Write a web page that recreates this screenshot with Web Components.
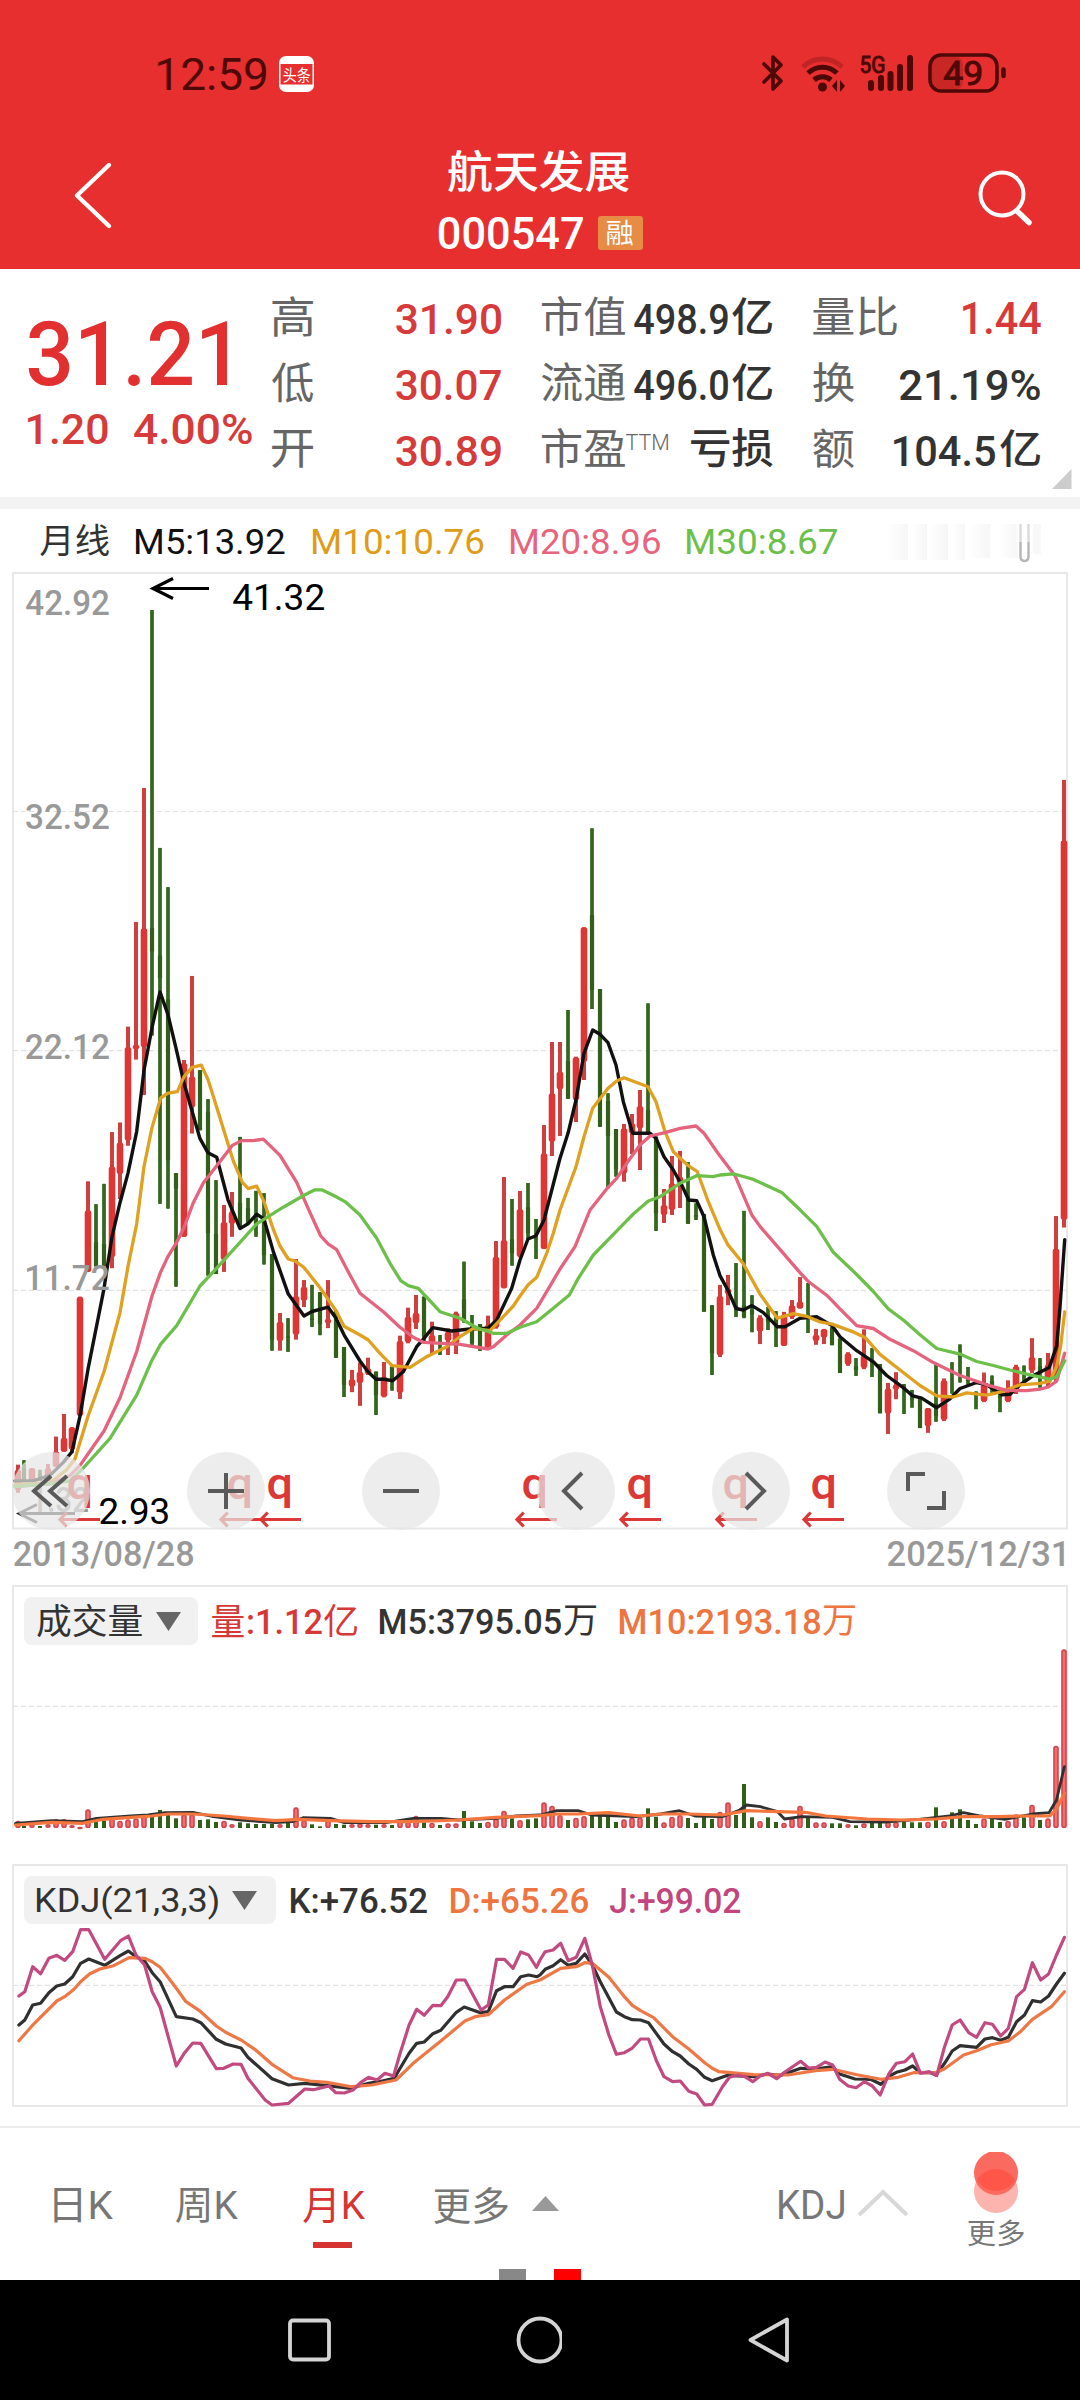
<!DOCTYPE html>
<html lang="zh-CN">
<head>
<meta charset="utf-8">
<title>航天发展 000547</title>
<style>
body{margin:0;background:#fff;width:1080px;font-family:Roboto,"Noto Sans CJK SC",sans-serif}
</style>
</head>
<body>
<stock-app></stock-app>
<script>
const FAMILY='Roboto, "Noto Sans CJK SC", sans-serif';
const pen=document.createElement('canvas').getContext('2d');
// Places a string so that its ink fills the box x,y,w,h.
function ink(text,x,y,w,h,color,weight=400){
  pen.font=`${weight} 100px ${FAMILY}`;
  const m=pen.measureText(text);
  const iw=m.actualBoundingBoxLeft+m.actualBoundingBoxRight, ih=m.actualBoundingBoxAscent+m.actualBoundingBoxDescent;
  const fs=100*h/ih, sx=w/(iw*fs/100);
  return `<text transform="translate(${(x+m.actualBoundingBoxLeft*fs/100*sx).toFixed(2)} ${(y+m.actualBoundingBoxAscent*fs/100).toFixed(2)}) scale(${sx.toFixed(4)} 1)" font-family='${FAMILY}' font-size="${fs.toFixed(2)}" font-weight="${weight}" fill="${color}">${text}</text>`;
}
function define(name,html){
  const t=document.createElement('template');t.innerHTML=html;
  customElements.define(name,class extends HTMLElement{
    constructor(){super();this.attachShadow({mode:'open'}).append(t.content.cloneNode(true));}
  });
}
customElements.define('ink-text',class extends HTMLElement{
  constructor(){super();this.attachShadow({mode:'open'});}
  connectedCallback(){
    const a=(n,d=0)=>this.getAttribute(n)??d, w=+a('w'),h=+a('h');
    this.shadowRoot.innerHTML=`<style>:host{display:block;flex:none;width:${w}px;height:${h}px;margin-left:${a('gap')}px;margin-top:${a('drop')}px}svg{display:block;overflow:visible}</style><svg width="${w}" height="${h}">${ink(a('t',''),0,0,w,h,'currentColor',+a('b',400))}</svg>`;
  }
});

define('status-bar',`<style>:host{display:flex;align-items:flex-start;height:57px;padding:53px 0 0 158px;color:#4d0808}svg{display:block;flex:none;overflow:visible}</style>
<ink-text t="12:59" w="108" h="33" drop="4" b="400"></ink-text>
<svg width="35" height="36" style="margin:3px 0 0 13px"><rect width="35" height="36" rx="7" fill="#fff"/><rect x="1.500" y="8" width="32" height="20.500" fill="#e62f2e"/>${ink('头条',4.5,11,27,15,'#fff',400)}</svg>
<svg width="245" height="40" viewBox="761 53 245 40" style="margin-left:447px" fill="none" stroke="#4d0808">
<path d="M764 64 L781 81 L773 89 V57 L781 65 L764 82" stroke-width="3.600" stroke-linejoin="round" stroke-linecap="round"/>
<path d="M803 67 A28 28 0 0 1 842 67" stroke="#c02424" stroke-width="5"/><path d="M808 73 A21 21 0 0 1 837 73" stroke-width="5"/><path d="M814 80 A13 13 0 0 1 831 80" stroke-width="5"/><circle cx="822.500" cy="87" r="4.500" fill="#4d0808" stroke="none"/>
<path d="M832 86 L837 80 V92 Z M845 86 L840 80 V92 Z" fill="#4d0808" stroke="none"/>
<g stroke-width="6" stroke-linecap="round"><path d="M871 83V88M881 78V88M890.500 74V88M900 67V88M910 58V88"/></g>
${ink('5G',861,56,23,17,'#4d0808',400)}
<rect x="932" y="57" width="31" height="32" rx="7" fill="#c92626" stroke="none"/><rect x="930" y="55" width="67" height="36" rx="11" stroke-width="3.500"/>
<path d="M1003.500 69.500V76" stroke-width="4.500" stroke-linecap="round"/>${ink('49',944,61,37,24,'#4d0808',400)}
</svg>`);

define('title-bar',`<style>:host{display:flex;align-items:flex-start;height:159px;color:#fff}svg{display:block;flex:none}.mid{width:720px;display:flex;flex-direction:column}.row{display:flex;margin-top:24px;padding-left:235px}.badge{box-sizing:border-box;width:45px;height:34px;margin-left:15px;border-radius:3px;background:#e68c45;padding:4px 9px}</style>
<svg width="54" height="75" viewBox="66 159 54 75" style="margin:48px 0 0 66px"><path d="M109 166L77 196.500L109 227" fill="none" stroke="#fff" stroke-width="4.400" stroke-linecap="round" stroke-linejoin="round"/></svg>
<div class="mid" style="margin-left:84px"><ink-text t="航天发展" w="181" h="43" gap="244" drop="39" b="500"></ink-text>
<div class="row"><ink-text t="000547" w="144" h="33" b="500"></ink-text><div class="badge"><ink-text t="融" w="26" h="25" b="400"></ink-text></div></div></div>
<svg width="62" height="62" viewBox="974 168 62 62" style="margin:57px 0 0 50px"><circle cx="1002" cy="195" r="21.500" fill="none" stroke="#fff" stroke-width="4"/><path d="M1018 213L1029 223.500" stroke="#fff" stroke-width="5.500" stroke-linecap="round"/></svg>`);

define('quote-board',`<style>:host{display:flex;align-items:flex-start;height:228px;color:#333;border-bottom:12px solid #f3f3f3}
.r{color:#d63a3a}.g{color:#666}.price{width:244.500px;padding:51px 0 0 27.500px}.price ink-text:first-child{color:#e23030}.price .r ink-text{color:#d63a3a}.row{display:flex}.grid{width:808px}.grid .row{height:66px;align-items:flex-start}.grid{padding-top:27px}.cell{display:flex;flex:none;height:42px}.c1{width:270px}.c2{width:271px}.c3{width:230px}svg{position:absolute;left:1051px;top:469px}</style>
<div class="price"><ink-text t="31.21" w="199.500" h="66" b="500"></ink-text><div class="row r"><ink-text t="1.20" w="79.500" h="32" drop="26" b="500"></ink-text><ink-text t="4.00%" w="118" h="32" gap="27" drop="26" b="500"></ink-text></div></div>
<div class="grid">
<div class="row"><div class="cell c1"><ink-text class="g" t="高" w="41" h="41"></ink-text><ink-text class="r" t="31.90" w="105" h="32" gap="83" drop="5.500" b="500"></ink-text></div><div class="cell c2"><ink-text class="g" t="市值" w="83" h="40"></ink-text><ink-text t="498.9" w="94" h="32" gap="9" drop="5.500" b="500"></ink-text><ink-text t="亿" w="40" h="37" gap="4" drop="2" b="500"></ink-text></div><div class="cell c3"><ink-text class="g" t="量比" w="84" h="39"></ink-text><ink-text class="r" t="1.44" w="78" h="32" gap="66" drop="5.500" b="500"></ink-text></div></div>
<div class="row"><div class="cell c1"><ink-text class="g" t="低" w="41" h="41"></ink-text><ink-text class="r" t="30.07" w="105" h="32" gap="83" drop="5.500" b="500"></ink-text></div><div class="cell c2"><ink-text class="g" t="流通" w="83" h="40"></ink-text><ink-text t="496.0" w="94" h="32" gap="9" drop="5.500" b="500"></ink-text><ink-text t="亿" w="40" h="37" gap="4" drop="2" b="500"></ink-text></div><div class="cell c3"><ink-text class="g" t="换" w="41" h="40"></ink-text><ink-text t="21.19%" w="140" h="32" gap="46" drop="5.500" b="500"></ink-text></div></div>
<div class="row"><div class="cell c1"><ink-text class="g" t="开" w="41" h="38" drop="2"></ink-text><ink-text class="r" t="30.89" w="105" h="32" gap="83" drop="5.500" b="500"></ink-text></div><div class="cell c2"><ink-text class="g" t="市盈" w="83" h="40"></ink-text><ink-text class="g" t="TTM" w="42" h="16" gap="1" drop="6" b="300"></ink-text><ink-text t="亏损" w="82" h="39" gap="23" b="500"></ink-text></div><div class="cell c3"><ink-text class="g" t="额" w="41" h="40"></ink-text><ink-text t="104.5" w="101" h="32" gap="40" drop="5.500" b="500"></ink-text><ink-text t="亿" w="40" h="37" gap="5" drop="2" b="500"></ink-text></div></div>
</div><svg width="21" height="20"><path d="M1 20H20.500V0Z" fill="#ccc"/></svg>`);

define('ma-legend',`<style>:host{display:flex;align-items:flex-start;height:46px;padding:15px 0 0 40px;color:#333}.k{color:#111}.o{color:#e09b17}.p{color:#e8637d}.n{color:#6cc04a}.ghost{width:160px;height:44px;margin-left:51px;flex:none}svg{display:block}</style>
<ink-text t="月线" w="69" h="32.500"></ink-text><ink-text class="k" t="M5:13.92" w="148.500" h="26" gap="27" drop="4"></ink-text><ink-text class="o" t="M10:10.76" w="170.500" h="26" gap="28.500" drop="4"></ink-text><ink-text class="p" t="M20:8.96" w="149" h="26" gap="27.500" drop="4"></ink-text><ink-text class="n" t="M30:8.67" w="150" h="26" gap="27" drop="4"></ink-text>
<svg class="ghost"><defs><linearGradient id="f"><stop offset="0" stop-color="#fff"/><stop offset="1" stop-color="#dedede"/></linearGradient><linearGradient id="u" x2="0" y2="1" gradientUnits="userSpaceOnUse" y1="0" x1="0"><stop offset="0" stop-color="#eee"/><stop offset="1" stop-color="#aaa"/></linearGradient></defs><g fill="url(#f)" opacity=".25"><rect x="0" y="0" width="20" height="36"/><rect x="25" y="0" width="14" height="36"/><rect x="42" y="0" width="18" height="36"/><rect x="66" y="0" width="11" height="36"/><rect x="82" y="0" width="20" height="34"/><rect x="112" y="0" width="18" height="34"/></g><rect x="145" width="8" height="30" fill="#f8f8f8"/><path d="M132.500 0V32Q132.500 37 136.500 37Q140.500 37 140.500 32V0" fill="none" stroke="#b5b5b5" stroke-width="2.400"/><rect x="128" y="0" width="16" height="18" fill="#fff" opacity=".5"/></svg>`);

// Candles: [trend, high, low, bodyTop, bodyBottom]; each block has its own origin and unit.
const blocks=[
{x:0,first:2,y:1000,u:1/2.703,c:`r 1256 1332 1270 1325|g 1244 1300 1265 1300|r 1265 1300 1265 1300|g 1270 1300 1280 1300|r 1254 1300 1265 1300|r 1180 1260 1220 1262|r 1119 1221 1183 1221|r 1155 1225 1155 1215|r 802 1124 802 1124|r 490 735 568 735|g 552 720 655 720|g 497 720 660 720|r 357 725 450 695|r 331 538 385 470|r 72 394 127 380|r -211 161 121 133|r -573 257 -194 127|g -1054 96 -194 -131|g -411 551 -120 -59|g -305 564 -2 433|g 468 775 468 510|r 162 640 170 640|r -65 361 207 290|g 190 352 190 352|g 268 745 302 630|g 487 740 633 740|r 554 735 600 702|r 519 640 572 605|g 370 612 548 612|g 535 602 562 602|g 516 640 590 605|g 522 715 590 690|g 687 948 687 918|r 846 948 870 922|g 860 951 910 913|r 700 918 800 905|r 757 830 775 812|g 770 884 860 865|g 790 906 790 876|r 757 887 862 874|g 840 967 840 967|g 938 1073 938 1040|r 1000 1060 1025 1045|r 980 1097 1005 1035`,
l:{k:'45,1300 100,1300 150,1285 190,1250 216,1221 240,1125 264,998 312,780 336,640 360,548 384,468 410,355 432,190 456,75 480,-22 504,40 528,130 552,225 600,375 624,413 650,425 684,540 720,618 744,605 770,579 792,592 820,680 865,795 912,854 936,842 984,830 1008,860 1032,905',
o:'45,1310 150,1305 200,1270 225,1240 264,1125 312,1005 360,845 384,720 410,605 432,450 456,345 482,265 504,252 532,248 552,207 576,182 604,176 624,215 650,290 700,435 727,493 745,510 770,503 792,545 820,620 840,665 865,700 886,706 912,723 960,778 1008,840 1032,882',
p:'45,1315 150,1308 210,1285 240,1258 312,1165 360,1075 410,950 456,800 482,735 504,693 530,655 552,615 580,548 610,495 650,448 697,393 725,380 760,380 790,376 840,420 890,493 930,575 962,638 985,660 1010,675 1045,735',
n:'45,1315 150,1308 210,1300 250,1265 330,1185 410,1068 455,975 482,930 530,880 600,773 650,725 720,655 770,605 850,560 912,528 945,513 965,513 1000,528 1035,545'}},
{x:360,first:46,y:1200,u:1/3,c:`r 473 525 505 522|g 515 645 515 585|r 486 592 530 590|g 500 572 500 545|r 407 597 422 578|r 323 430 350 427|r 285 387 338 370|g 290 425 290 410|r 365 462 405 430|g 405 465 450 455|r 385 465 395 422|r 335 462 338 430|g 185 368 298 365|g 345 435 385 430|g 372 453 372 440|r 347 448 375 448|r 123 386 170 383|r -69 265 120 265|g -3 197 118 160|r -27 172 27 170|g -51 118 22 100|g 57 177 115 118|r -225 147 -140 147|r -474 -132 -320 -175|r -474 -192 -385 -332|g -570 -304 -417 -304|r -430 -234 -428 -300|r -818 -360 -818 -415|g -1115 -573 -855 -630|g -633 -220 -633 -220|g -320 -35 -297 -192|g -213 -70 -213 -92|r -228 -55 -215 -80|r -258 -138 -230 -200|r -330 -90 -282 -215|g -590 -195 -270 -200|g -190 93 -190 40|r -33 69 15 45|r -132 45 -50 30|r -147 24 -70 -50|g -114 72 -10 70|g 10 60 45 50|g 42 335 42 335|g 316 525 316 460`,
l:{k:'0,483 24,515 48,538 72,538 98,542 130,515 170,440 192,415 218,383 275,393 330,387 384,385 410,360 455,265 480,180 504,117 528,107 552,60 600,-125 624,-200 648,-300 672,-440 698,-510 720,-497 744,-472 768,-405 790,-295 818,-200 870,-200 888,-185 912,-130 940,-90 965,-45 986,0 1010,2 1032,50 1060,165',
o:'0,405 25,420 60,460 96,497 150,502 200,470 260,440 300,410 340,385 390,392 430,350 460,318 480,288 504,255 530,232 560,160 580,100 600,30 648,-100 672,-190 698,-275 744,-335 770,-357 792,-367 864,-340 888,-295 915,-205 940,-145 985,-103 1012,-85 1045,5',
p:'0,280 70,335 120,382 160,412 190,427 300,433 384,447 400,440 440,405 480,375 530,325 560,275 600,207 645,140 690,30 744,-38 770,-65 800,-110 840,-165 870,-192 915,-202 960,-215 1008,-222 1032,-200',
n:'0,45 50,115 90,190 122,242 145,257 175,265 205,297 240,335 300,355 350,383 400,400 440,400 480,382 530,365 580,325 628,285 655,235 700,165 780,83 820,42 865,3 900,-10 960,-50 1010,-73 1060,-70'}},
{x:720,first:90,y:1000,u:1/2.703,c:`r 770 965 800 960|r 743 825 780 795|g 711 857 826 835|g 570 860 825 857|g 798 898 838 850|r 852 930 857 896|g 830 892 850 870|g 841 938 860 880|r 843 935 850 935|r 811 862 825 858|r 749 834 815 834|g 765 900 860 862|r 889 932 905 922|r 889 930 889 912|g 885 933 885 933|g 915 1008 915 1008|r 952 989 955 985|g 968 1016 990 1000|r 890 998 960 995|g 941 1019 975 980|g 984 1117 984 1117|r 1035 1173 1050 1118|r 1006 1079 1040 1053|g 1038 1119 1045 1050|g 1054 1102 1075 1080|g 1078 1157 1078 1157|r 1103 1170 1103 1152|g 985 1140 1090 1125|r 1023 1138 1028 1135|g 979 1064 1000 1005|g 931 1034 960 965|g 992 1040 1020 1030|g 1058 1106 1060 1070|r 1007 1087 1040 1085|g 1015 1062 1030 1040|g 1052 1114 1070 1075|r 1028 1087 1055 1085|r 986 1065 990 1055|g 988 1032 1005 1010|r 914 1008 965 1003|g 968 1048 990 1010|r 954 1045 985 1035|r 584 1030 672 1025|r -595 615 -432 594`,
l:{k:'0,745 24,785 48,834 70,838 96,826 130,845 172,883 195,883 240,860 290,856 336,880 360,910 410,948 460,978 500,1015 550,1048 578,1070 605,1076 650,1102 690,1078 720,1050 770,1034 800,1040 845,1067 870,1066 900,1040 940,1015 988,993 1010,935 1020,830 1034,648',
o:'0,620 24,662 70,713 120,795 172,860 220,848 260,855 300,870 336,876 400,897 435,912 480,958 540,1000 600,1042 650,1070 700,1073 740,1062 800,1068 850,1058 900,1040 960,1036 990,1030 1010,990 1022,935 1034,843',
p:'0,422 45,475 96,582 120,612 168,662 240,737 264,760 320,798 360,835 410,880 460,888 510,917 580,948 640,980 720,1015 800,1040 860,1055 920,1056 960,1052 985,1046 1010,1030 1034,955',
n:'0,473 40,470 70,477 100,485 185,520 240,567 290,612 340,682 410,742 460,788 505,835 550,865 600,905 650,942 720,957 770,977 820,988 870,1000 930,1013 990,1025 1010,1018 1034,975'}}];
const RED='#de3535',GREEN='#315f17';
const place=(s,x,y,ux,uy)=>s.split(' ').map(p=>{const[a,b]=p.split(',');return (x+a*ux).toFixed(1)+','+(y+b*uy).toFixed(1)}).join(' ');
const line=(pts,c,w=3.3)=>`<polyline points="${pts}" fill="none" stroke="${c}" stroke-width="${w}" stroke-linejoin="round" stroke-linecap="round"/>`;
const grid=y=>`<path d="M13 ${y}H1067" stroke="#e2e2e2" stroke-width="1.200" stroke-dasharray="5 3"/>`;
let candles='';const ma={k:'',o:'',p:'',n:''};
for(const b of blocks){
  b.c.split('|').forEach((s,n)=>{
    const [t,...v]=s.split(' '),x=(b.first+n)*8+(b.first+n==2?2:0),[hi,lo,bt,bb]=v.map(q=>b.y+q*b.u);
    candles+=t=='r'?`<rect x="${x-2}" y="${hi}" width="4" height="${lo-hi}" fill="#ce4040"/><rect x="${x-3.3}" y="${bt}" width="6.600" height="${Math.max(bb-bt,3)}" rx="2.500" fill="${RED}"/>`
    :`<rect x="${x-2}" y="${hi}" width="4" height="${lo-hi}" fill="#4b7c38"/><rect x="${x-1}" y="${hi}" width="2" height="${lo-hi}" fill="#356620"/><rect x="${x-2.1}" y="${bt}" width="4.200" height="${bb-bt}" fill="${GREEN}"/>`;
  });
  for(const k in ma)ma[k]+=' '+place(b.l[k],b.x,b.y,1/3,b.u);
}
const left=(x1,x2,y,c,w,d)=>`<path d="M${x2} ${y}H${x1+1}M${x1+d*(d>8?2.1:1.1)} ${y-d}L${x1+1} ${y}L${x1+d*(d>8?2.1:1.1)} ${y+d}" fill="none" stroke="${c}" stroke-width="${w}"/>`;
const marks=[[68,59],[228,220],[268,260],[523,516],[628,620],[724,716],[812,803]].map(([q,a])=>ink('q',q,1475,22.5,33,'#dc3838',500)+left(a,a+41,1519.5,'#dc3838',3.2,7)).join('');
define('round-button',`<style>:host{display:grid;place-items:center;width:78px;height:78px;border-radius:50%;background:rgba(230,230,230,.72)}</style><slot></slot>`);
const G='fill="none" stroke="#5a5a5a" stroke-width="4"';
define('price-chart',`<style>:host{display:block;position:relative;height:962px}.c{display:block}.tools{position:absolute;left:12px;top:882px;width:953px;display:flex;justify-content:space-between}</style>
<svg class="c" width="1080" height="962" viewBox="0 570 1080 962">
<rect x="13" y="573" width="1054" height="955.500" fill="none" stroke="#e8e8e8" stroke-width="2"/>${grid(811.5)}${grid(1050.7)}${grid(1290.4)}
${candles}${line(ma.k.trim(),'#111',3.4)}${line(ma.o.trim(),'#e0a020')}${line(ma.p.trim(),'#e5637d')}${line(ma.n.trim(),'#6cc04a')}
${ink('42.92',26,589,83,26,'#999',500)}${ink('32.52',26,803.5,83,26,'#999',500)}${ink('22.12',26,1033,83,26,'#999',500)}${ink('11.72',27,1264,82,26,'#999',500)}${ink('1.32',33,1486.5,55,26,'#999',500)}
${left(152,209,588.5,'#000',3.2,10)}${ink('41.32',233,583,91,27,'#000')}${left(18,75,1513.5,'#333',2.8,9)}${ink('2.93',100,1497.5,68,27,'#000')}
${marks}</svg>
<div class="tools"><round-button><svg width="40" height="40" ${G}><path d="M20 5L3 20L20 35M36 5L19 20L36 35"/></svg></round-button><round-button><svg width="40" height="40" ${G}><path d="M2 20H38M20 2V38"/></svg></round-button><round-button><svg width="40" height="40" ${G}><path d="M2 20H38"/></svg></round-button><round-button><svg width="40" height="40" ${G}><path d="M26 2L8 20L26 38"/></svg></round-button><round-button><svg width="40" height="40" ${G}><path d="M15 2L33 20L15 38"/></svg></round-button><round-button><svg width="40" height="40" ${G}><path d="M2 20V3H19M38 20V37H21"/></svg></round-button></div>`);

define('date-range',`<style>:host{display:flex;justify-content:space-between;height:43px;padding:9px 16px 0 14px;color:#999}</style><ink-text t="2013/08/28" w="179" h="27" b="500"></ink-text><ink-text t="2025/12/31" w="176" h="27" b="500"></ink-text>`);

const vol='r752 g768 r762 g768 r762 r747 r747 r765 r770 r718 g755 g752 r745 r752 r748 r745 r735 g733 g720 g735 g745 r733 r733 g750 g748 g756 r752 r762 g757 g760 g762 g762 g762 r762 g758 r712 r750 g763 g769 r742 g762 g764 r762 r760 r762 g764 r762 g765 r752 r755 r737 g757 r758 g765 r760 r760 g723 g754 g759 r755 r745 r722 g745 r750 g748 g745 r697 r707 r735 g750 r743 r738 g738 g738 g740 g756 r748 r742 r742 g715 g740 r757 r740 r735 g744 g759 g741 g747 r725 r697 g735 g642 g742 r753 g742 g756 r758 r745 r707 g740 r757 r757 g760 g760 r762 g766 r760 g758 g757 r755 r755 g755 g757 g757 r755 g712 r753 g727 g718 g750 g762 r745 g744 g756 r752 r733 g742 r704 g750 r745 r527 r238'.split(' ').map((s,n)=>{
  const x=(n+2)*8+(n==0?2:0),y=1570+s.slice(1)/3,h=1828-y;
  return s[0]=='r'?`<rect x="${x-2}" y="${y+.8}" width="4" height="${Math.max(h-1.6,1)}" rx="1.800" fill="#fa6b68" stroke="#cf4551" stroke-width="1.600"/>`:`<rect x="${x-2}" y="${y}" width="4" height="${h}" fill="${GREEN}"/>`;}).join('');
const U=1/2.904,V=1/3;
const two=(a,b,y)=>place(a,0,y,U,V)+' '+place(b,540,y,U,V);
const vk=two('45,760 150,752 240,755 280,745 380,738 430,735 480,728 560,727 620,740 700,750 800,758 850,755 880,743 960,745 1000,758 1120,758 1200,745 1280,745 1330,750 1440,745 1500,738','0,735 50,722 110,722 150,735 280,740 350,732 405,722 450,738 530,740 580,720 600,705 640,710 690,725 710,747 760,740 850,742 900,755 1000,756 1100,748 1190,738 1230,728 1280,738 1350,748 1430,732 1478,728 1500,690 1523,590',1570);
const vo=two('45,765 150,757 240,760 300,748 380,742 440,738 490,732 560,732 650,738 720,745 800,752 870,748 960,752 1080,755 1180,755 1260,753 1330,750 1440,742','0,737 50,732 110,732 200,728 290,738 350,732 430,732 530,735 600,722 690,725 770,727 830,738 950,747 1050,750 1150,747 1230,740 1330,740 1400,738 1480,738 1500,718 1523,670',1570);
define('indicator-panel',`<style>:host{display:grid;width:1080px}::slotted(svg){grid-area:1/1;display:block}.head{grid-area:1/1;display:flex;align-items:flex-start;padding:13px 0 0 24px}</style><slot name="plot"></slot><div class="head"><slot></slot></div>`);
define('picker-pill',`<style>:host{box-sizing:border-box;display:flex;flex:none;align-items:flex-start;height:48px;padding:7px 16px 0 13px;border-radius:8px;background:#f1f1f1;color:#333}svg{margin:8px 0 0 13px}</style><slot></slot><svg width="27" height="19"><path d="M1 0H26L13.500 19Z" fill="#666"/></svg>`);
define('volume-panel',`<style>:host{display:block;height:279px;color:#333}</style><indicator-panel>
<svg slot="plot" width="1080" height="250" viewBox="0 1584 1080 250"><path d="M13 1828V1586H1067V1828" fill="none" stroke="#e8e8e8" stroke-width="2"/>${grid(1706.3)}${vol}${line(vk,'#303030',2.8)}${line(vo,'#f4763d',3.2)}</svg>
<picker-pill style="width:174px"><ink-text t="成交量" w="105" h="33.500"></ink-text></picker-pill>
<ink-text style="color:#d63838" t="量" w="32" h="32" gap="14" drop="8"></ink-text><ink-text style="color:#d63838" t=":1.12" w="74" h="26" gap="4" drop="11" b="500"></ink-text><ink-text style="color:#d63838" t="亿" w="33" h="33" gap="2" drop="7"></ink-text>
<ink-text t="M5:3795.05" w="181" h="26" gap="23" drop="11" b="500"></ink-text><ink-text t="万" w="32" h="30" gap="3" drop="9"></ink-text>
<ink-text style="color:#ee7440" t="M10:2193.18" w="200" h="26" gap="24" drop="11" b="500"></ink-text><ink-text style="color:#ee7440" t="万" w="32" h="30" gap="3" drop="9"></ink-text></indicator-panel>`);

const K=two('55,525 72,510 95,465 118,460 142,428 165,408 188,402 211,380 234,340 258,327 304,346 350,316 373,303 395,320 420,333 442,368 465,395 512,500 560,507 583,518 628,568 655,582 700,594 720,622 790,686 838,705 885,700 950,707 1020,715 1070,700 1100,695 1145,685 1162,655 1188,610 1210,580 1232,576 1257,551 1280,541 1325,487 1348,471 1395,488 1418,485 1442,422 1465,410 1490,410 1512,380 1535,375 1560,380','0,375 15,358 38,347 60,329 82,346 105,340 130,312 152,345 175,395 222,486 245,500 268,509 292,510 315,518 360,582 385,605 407,618 432,642 455,658 478,682 500,692 545,676 620,680 660,672 700,676 757,655 800,657 850,650 870,672 915,687 960,688 990,703 1015,678 1035,667 1060,660 1082,648 1105,668 1130,667 1150,675 1175,640 1197,603 1220,587 1268,592 1292,567 1314,563 1338,571 1360,562 1384,515 1407,495 1430,452 1454,456 1477,438 1500,402 1523,370',1850);
const D=two('55,572 100,520 165,453 188,440 215,418 234,395 260,372 290,357 330,347 375,323 420,325 442,335 465,352 485,378 512,415 540,455 583,485 628,528 655,547 700,570 740,598 790,643 850,683 900,693 950,697 1020,710 1080,705 1150,690 1200,640 1280,573 1350,513 1380,500 1418,494 1465,450 1530,403','0,390 60,355 105,350 130,338 152,340 200,382 245,440 268,466 292,482 330,503 385,560 432,597 480,640 500,655 520,665 620,674 720,675 800,662 850,658 920,674 990,688 1040,682 1085,668 1150,668 1175,656 1230,615 1268,602 1310,584 1360,573 1395,545 1430,508 1485,470 1523,425',1850);
const J=two('55,438 72,425 95,350 118,371 142,325 165,316 188,331 211,305 234,239 258,239 304,328 350,272 373,258 395,315 420,345 442,425 465,472 512,648 535,610 560,579 583,580 628,656 650,655 677,642 700,643 720,685 770,750 790,765 838,760 885,717 910,719 955,708 975,728 1000,729 1025,720 1048,697 1070,682 1095,690 1118,670 1143,678 1162,610 1188,525 1210,478 1232,496 1257,466 1280,467 1300,440 1325,390 1350,390 1397,480 1418,465 1442,328 1465,328 1490,355 1512,306 1535,315 1558,352','0,330 15,305 38,300 60,280 82,332 105,322 130,265 152,345 175,470 200,555 222,613 245,608 268,594 292,567 315,567 338,632 360,680 385,695 407,693 432,724 455,732 478,765 500,763 530,710 550,682 575,675 595,680 618,695 640,677 662,670 687,686 710,667 757,634 780,654 803,652 828,636 850,645 870,688 895,708 918,713 942,695 965,708 988,735 1013,672 1035,640 1060,635 1082,612 1105,670 1130,665 1152,677 1175,590 1197,525 1220,510 1245,548 1268,562 1292,518 1314,523 1338,558 1360,535 1384,440 1407,418 1430,338 1454,390 1477,372 1500,315 1523,262',1850);
define('kdj-panel',`<style>:host{display:block;height:263px;color:#333}.d{color:#ee7440}.j{color:#c2457e}</style><indicator-panel>
<svg slot="plot" width="1080" height="250" viewBox="0 1863 1080 250"><rect x="13" y="1865" width="1054" height="241" fill="none" stroke="#e8e8e8" stroke-width="2"/>${grid(1985.4)}${line(K,'#303030',3.2)}${line(D,'#ee7845',3.2)}${line(J,'#c24a80',3.2)}</svg>
<picker-pill style="width:252px"><ink-text t="KDJ(21,3,3)" w="181" h="35" drop="2"></ink-text></picker-pill>
<ink-text t="K:+76.52" w="136" h="26" gap="15" drop="11" b="500"></ink-text><ink-text class="d" t="D:+65.26" w="137" h="26" gap="23.500" drop="11" b="500"></ink-text><ink-text class="j" t="J:+99.02" w="130.500" h="26" gap="22" drop="11" b="500"></ink-text></indicator-panel>`);

define('tab-bar',`<style>:host{box-sizing:border-box;display:flex;flex-direction:column;height:154px;border-top:2px solid #ececec;color:#777}.row{display:flex;align-items:flex-start;height:141px;padding-left:54px}.on{color:#d63333}.on::after{content:"";display:block;width:39px;height:6px;background:#d63333;margin:20px 0 0 10px}.p{display:flex;padding-left:499px;gap:28px}.p i{width:27px;height:11px;background:#888}.p i+i{background:#f00}svg{display:block;flex:none}.more{margin:24px 0 0 58px}</style>
<div class="row"><ink-text t="日K" w="59" h="34" drop="60"></ink-text><ink-text t="周K" w="62" h="34" gap="63" drop="60"></ink-text><div class="on" style="margin-left:65px"><ink-text t="月K" w="62" h="34" drop="60"></ink-text></div><ink-text t="更多" w="74" h="36" gap="69" drop="59"></ink-text><svg width="27" height="15" style="margin:68px 0 0 24px"><path d="M0 15L13.500 0L27 15Z" fill="#999"/></svg>
<ink-text t="KDJ" w="65" h="29" gap="220" drop="62"></ink-text><svg width="54" height="32" style="margin:59px 0 0 12px"><path d="M3 28L27 5L51 28" fill="none" stroke="#d8d8d8" stroke-width="4"/></svg>
<div class="more"><svg width="56" height="62"><circle cx="28" cy="39" r="22" fill="#fdb4ae"/><circle cx="28" cy="21" r="22" fill="#fb6a5e"/><path d="M9 28A22 22 0 0 1 47 28A22 22 0 0 1 9 28Z" fill="#fe574a"/></svg><ink-text t="更多" w="56" h="27" drop="6"></ink-text></div></div><div class="p"><i></i><i></i></div>`);
define('nav-bar',`<style>:host{display:flex;align-items:center;height:120px;background:#000;padding-left:286px;gap:180px}</style>
<svg width="48" height="48" fill="none" stroke="#d4d4d4" stroke-width="3.800"><rect x="4" y="4.500" width="39" height="39" rx="3"/></svg><svg width="48" height="48" fill="none" stroke="#d4d4d4" stroke-width="3.800"><circle cx="26" cy="24" r="21.500"/></svg><svg width="48" height="48" fill="none" stroke="#d4d4d4" stroke-width="3.800" stroke-linejoin="round"><path d="M45 3.500V44.500L8.500 24Z"/></svg>`);
define('stock-app',`<style>:host{display:block;width:1080px;height:2400px;overflow:hidden;position:relative;background:#fff}header{background:#e62f2e;height:269px}</style>
<header><status-bar></status-bar><title-bar></title-bar></header><quote-board></quote-board><ma-legend></ma-legend><price-chart></price-chart><date-range></date-range><volume-panel></volume-panel><kdj-panel></kdj-panel><tab-bar></tab-bar><nav-bar></nav-bar>`);
</script>
</body>
</html>
